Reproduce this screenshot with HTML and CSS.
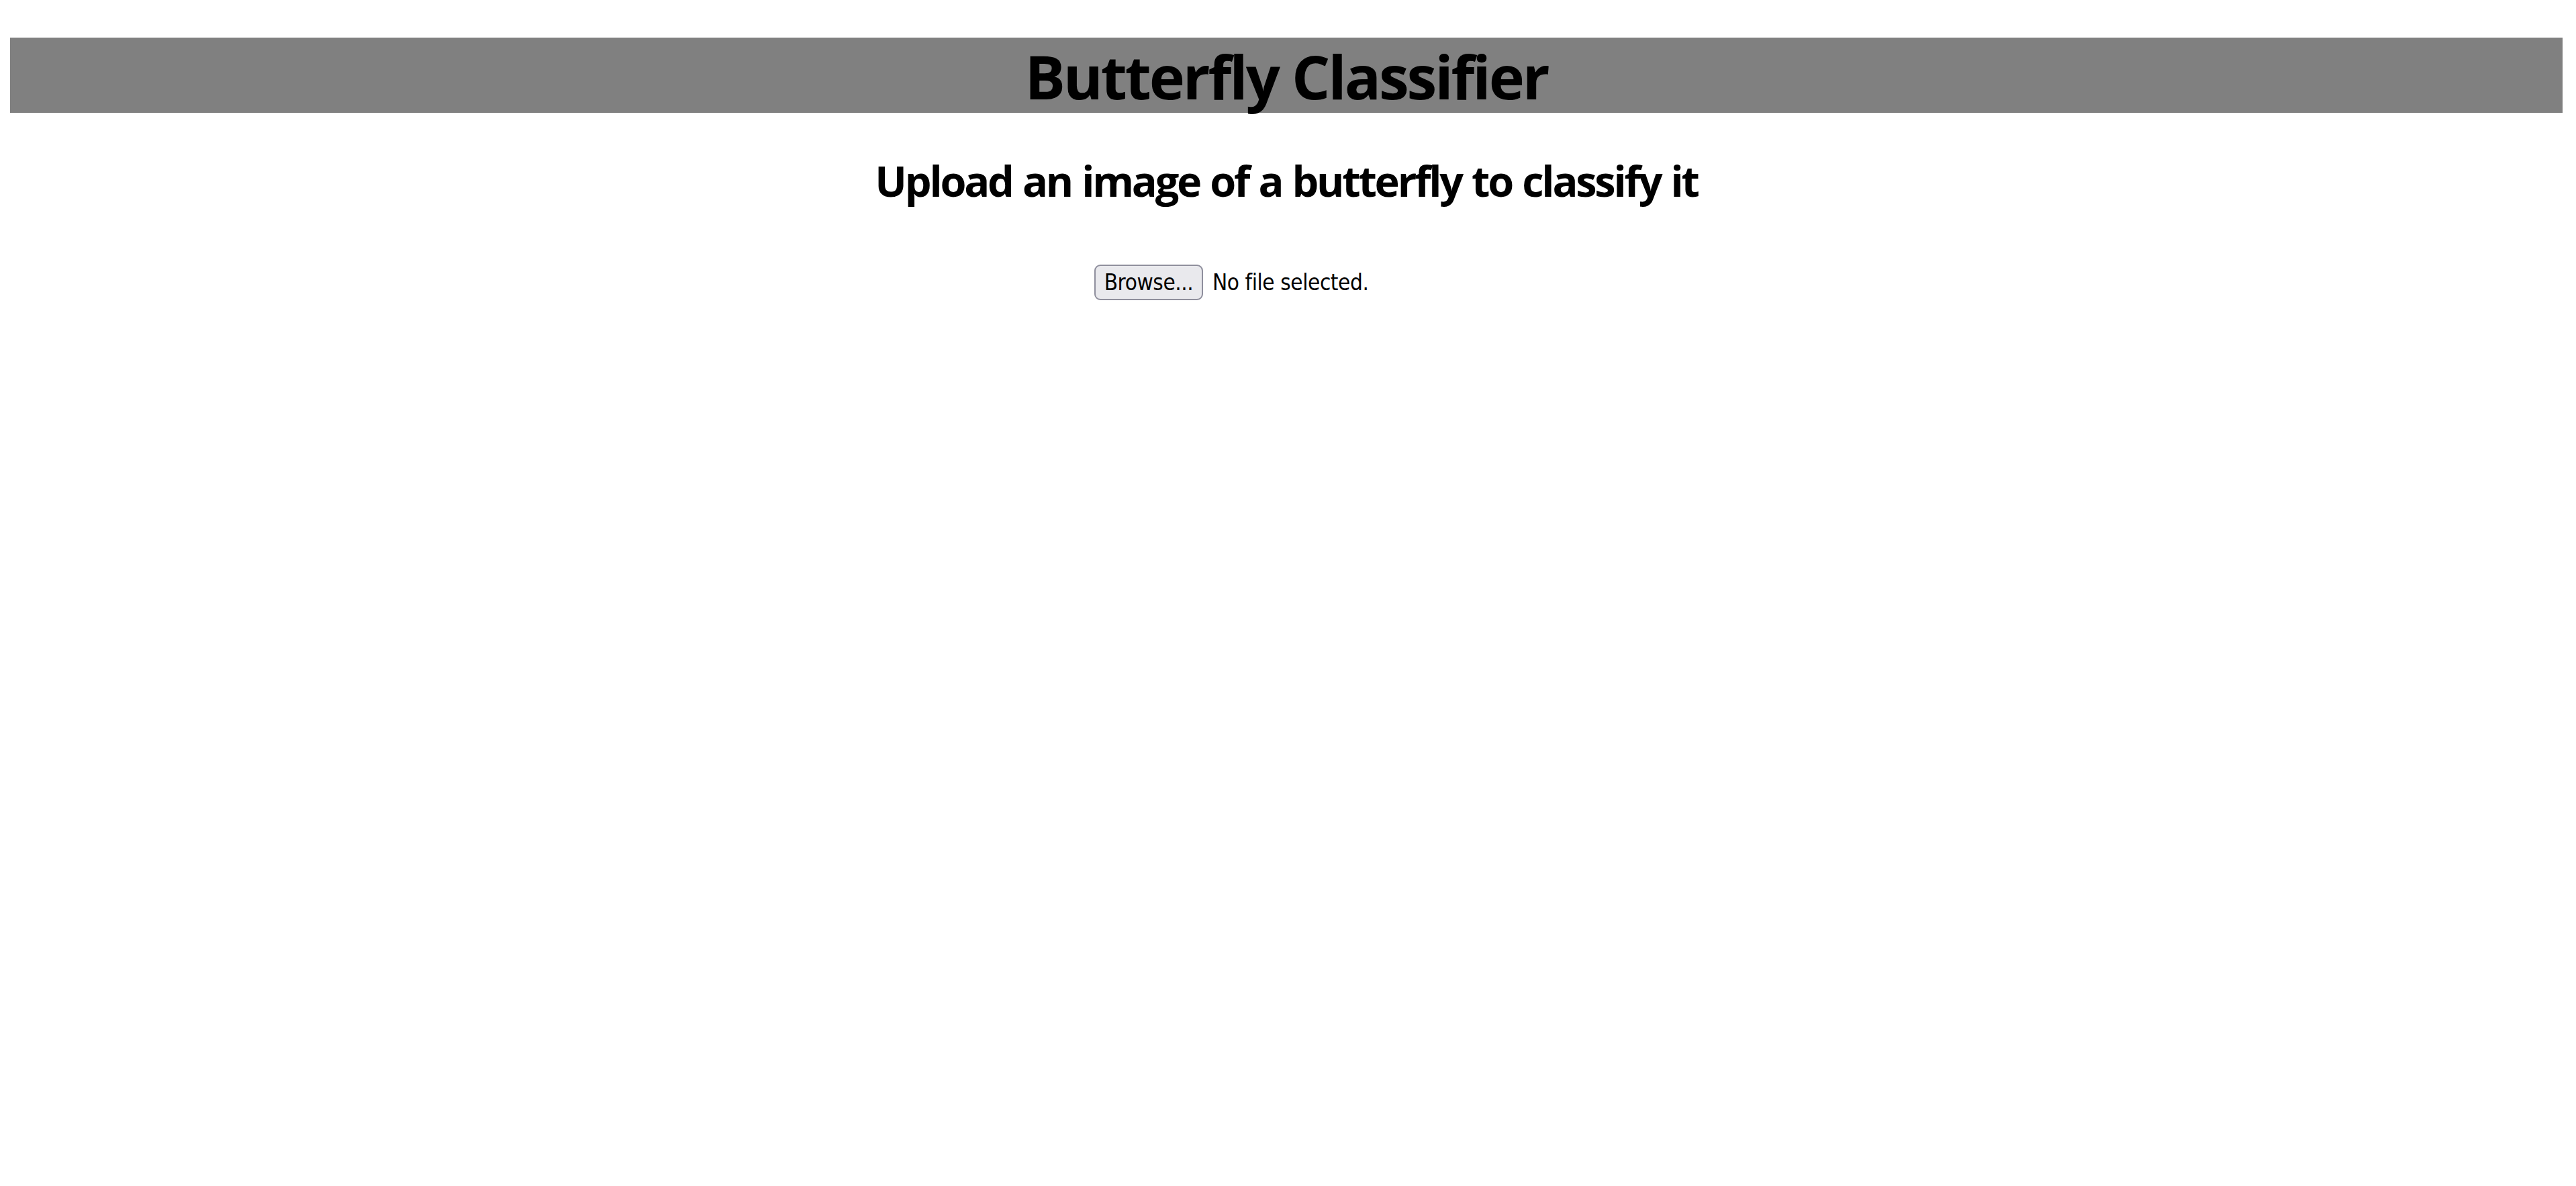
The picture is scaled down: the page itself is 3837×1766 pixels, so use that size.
FILE: index.html
```html
<!DOCTYPE html>
<html lang="en">
<head>
<meta charset="utf-8">
<title>Butterfly Classifier</title>
<link rel="stylesheet" href="styles.css">
</head>
<body>
  <header class="title-bar">
    <h1 class="title">Butterfly Classifier</h1>
  </header>
  <main class="content">
    <h2 class="subtitle">Upload an image of a butterfly to classify it</h2>
    <div class="upload">
      <div class="file-input">
        <button class="browse" type="button">Browse...</button>
        <span class="file-label">No file selected.</span>
      </div>
    </div>
  </main>
</body>
</html>
```

FILE: styles.css
```css
html, body {
  background: #ffffff;
}
body {
  margin: 0;
  padding: 56px 20px 0 15px;
  color: #000000;
  font-family: "Open Sans", "Noto Sans", sans-serif;
}
.title-bar {
  background: #808080;
  height: 112px;
  display: flex;
  justify-content: center;
  align-items: flex-start;
}
.title {
  margin: 0;
  font-size: 90px;
  font-weight: 700;
  line-height: 114px;
  letter-spacing: -3.1px;
}
.content {
  display: flex;
  flex-direction: column;
  align-items: center;
}
.subtitle {
  margin: 58px 0 0 0;
  font-size: 63px;
  font-weight: 700;
  line-height: 86px;
  letter-spacing: -3.2px;
  word-spacing: 2px;
}
.upload {
  margin-top: 82px;
  display: flex;
  justify-content: center;
}
.file-input {
  width: 572px;
  display: flex;
  align-items: center;
  gap: 14px;
  font-family: "DejaVu Sans Condensed", "DejaVu Sans", sans-serif;
  font-size: 33px;
  letter-spacing: -0.4px;
}
.browse {
  box-sizing: border-box;
  height: 53px;
  width: 162px;
  padding: 0;
  margin: 0;
  font-family: inherit;
  font-size: 33px;
  letter-spacing: -0.4px;
  color: #000;
  background: #e9e9ed;
  border: 2px solid #8f8f9d;
  border-radius: 9px;
}
.file-label {
  white-space: nowrap;
}
```
